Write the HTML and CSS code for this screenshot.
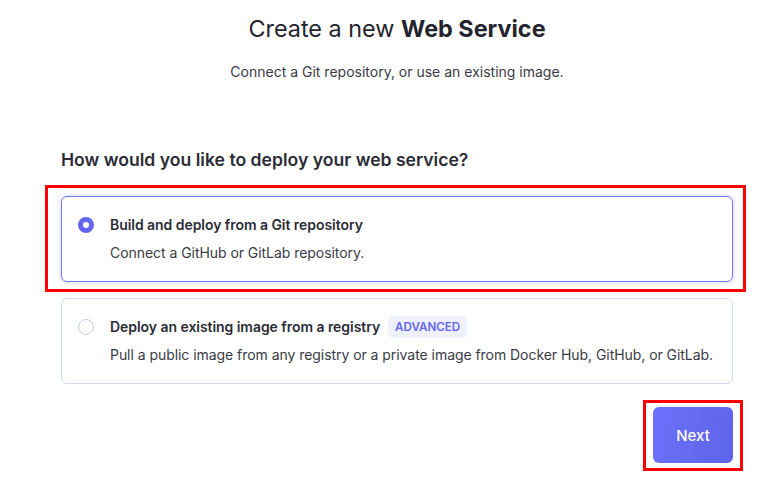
FILE: index.html
```html
<!DOCTYPE html>
<html lang="en">
<head>
<meta charset="utf-8">
<title>Create a new Web Service</title>
<link rel="stylesheet" href="styles.css">
</head>
<body>
<main class="page">
  <header class="intro">
    <h1 class="title">Create a new <strong>Web Service</strong></h1>
    <p class="subtitle">Connect a Git repository, or use an existing image.</p>
  </header>

  <section class="content">
    <h2 class="question">How would you like to deploy your web service?</h2>

    <div class="options">
      <div class="option-wrap">
        <label class="option option-selected">
          <span class="radio radio-on"></span>
          <span class="option-text">
            <span class="option-title">Build and deploy from a Git repository</span>
            <span class="option-desc">Connect a GitHub or GitLab repository.</span>
          </span>
        </label>
        <span class="highlight highlight-card"></span>
      </div>

      <label class="option">
        <span class="radio"></span>
        <span class="option-text">
          <span class="option-title">Deploy an existing image from a registry <span class="badge">ADVANCED</span></span>
          <span class="option-desc">Pull a public image from any registry or a private image from Docker Hub, GitHub, or GitLab.</span>
        </span>
      </label>
    </div>

    <div class="actions">
      <div class="btn-wrap">
        <button class="btn-next" type="button">Next</button>
        <span class="highlight highlight-btn"></span>
      </div>
    </div>
  </section>
</main>
</body>
</html>
```

FILE: styles.css
```css
* { box-sizing: border-box; }

html, body {
  margin: 0;
  padding: 0;
  background: #ffffff;
}

body {
  font-family: Inter, "Noto Sans", "Liberation Sans", sans-serif;
  color: #2b2c36;
}

.page {
  width: 672px;
  margin-left: 61px;
  padding-top: 13px;
  padding-bottom: 28px;
}

.intro {
  display: flex;
  flex-direction: column;
  align-items: center;
}

.title {
  margin: 0;
  font-size: 23.4px;
  line-height: 32px;
  font-weight: 400;
  color: #23242e;
}

.title strong {
  font-weight: 700;
}

.subtitle {
  margin: 17px 0 0;
  font-size: 14px;
  line-height: 20px;
  color: #3a3b45;
}

.content {
  margin-top: 64px;
}

.question {
  margin: 0;
  font-size: 17.6px;
  line-height: 28px;
  font-weight: 600;
  color: #2b2c36;
}

.options {
  margin-top: 22px;
  display: flex;
  flex-direction: column;
  gap: 16px;
}

.option-wrap {
  position: relative;
}

.option {
  display: flex;
  align-items: flex-start;
  gap: 16px;
  padding: 16px;
  border: 1px solid #cfdaee;
  border-radius: 6px;
  background: #fff;
  cursor: pointer;
}

.option-selected {
  border-color: #7276f2;
  box-shadow: 0 0 5px 1px rgba(99, 102, 241, 0.22);
}

.radio {
  flex: none;
  width: 16px;
  height: 16px;
  margin-top: 4px;
  border-radius: 50%;
  border: 1px solid #c3cde6;
  background: #fff;
}

.radio-on {
  border: 5px solid #6366f1;
}

.option-text {
  display: flex;
  flex-direction: column;
  gap: 4px;
  min-width: 0;
}

.option-title {
  display: flex;
  align-items: center;
  font-size: 14px;
  line-height: 24px;
  font-weight: 600;
  letter-spacing: -0.05px;
  color: #2b2c36;
}

.option-desc {
  font-size: 14px;
  line-height: 24px;
  letter-spacing: -0.05px;
  white-space: nowrap;
  color: #3a3b45;
}

.badge {
  margin-left: 8px;
  padding: 0 7px;
  height: 22px;
  display: inline-flex;
  align-items: center;
  border-radius: 5px;
  background: #eef0fe;
  color: #6366f1;
  font-size: 11.6px;
  font-weight: 600;
  letter-spacing: 0;
}

.actions {
  margin-top: 23px;
  display: flex;
  justify-content: flex-end;
}

.btn-wrap {
  position: relative;
}

.btn-next {
  display: block;
  width: 80px;
  height: 56px;
  border: 0;
  border-radius: 6px;
  background: linear-gradient(100deg, #6c70fb 0%, #5d65e9 100%);
  color: #ffffff;
  font-family: inherit;
  font-size: 15px;
  font-weight: 500;
  cursor: pointer;
}

.highlight {
  position: absolute;
  border: 3px solid #ff0000;
  pointer-events: none;
}

.highlight-card {
  top: -11px;
  left: -16px;
  right: -13px;
  bottom: -10px;
}

.highlight-btn {
  top: -7px;
  left: -10px;
  right: -10px;
  bottom: -8px;
}
```
